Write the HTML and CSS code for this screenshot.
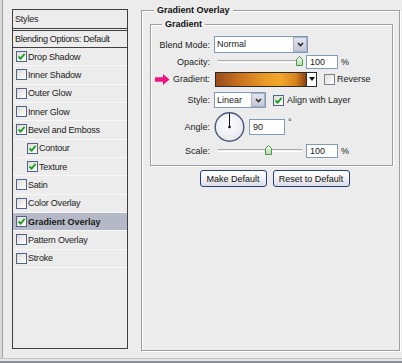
FILE: index.html
```html
<!DOCTYPE html>
<html>
<head>
<meta charset="utf-8">
<title>Layer Style - Gradient Overlay</title>
<link rel="stylesheet" href="styles.css">
</head>
<body>
<div class="dialog">
  <div class="sidebar">
    <div class="list">
      <div class="head">Styles</div>
      <div class="blend">Blending Options: Default</div>
      <div class="item"><span class="cb"><svg viewBox="0 0 9 9" width="9" height="9"><path d="M1.5 4.5 L3.6 6.6 L7.6 1.8" fill="none" stroke="#1f9c25" stroke-width="1.8"/></svg></span>Drop Shadow</div>
      <div class="item"><span class="cb"></span>Inner Shadow</div>
      <div class="item"><span class="cb"></span>Outer Glow</div>
      <div class="item"><span class="cb"></span>Inner Glow</div>
      <div class="item"><span class="cb"><svg viewBox="0 0 9 9" width="9" height="9"><path d="M1.5 4.5 L3.6 6.6 L7.6 1.8" fill="none" stroke="#1f9c25" stroke-width="1.8"/></svg></span>Bevel and Emboss</div>
      <div class="item sub"><span class="cb"><svg viewBox="0 0 9 9" width="9" height="9"><path d="M1.5 4.5 L3.6 6.6 L7.6 1.8" fill="none" stroke="#1f9c25" stroke-width="1.8"/></svg></span>Contour</div>
      <div class="item sub"><span class="cb"><svg viewBox="0 0 9 9" width="9" height="9"><path d="M1.5 4.5 L3.6 6.6 L7.6 1.8" fill="none" stroke="#1f9c25" stroke-width="1.8"/></svg></span>Texture</div>
      <div class="item"><span class="cb"></span>Satin</div>
      <div class="item"><span class="cb"></span>Color Overlay</div>
      <div class="item active"><span class="cb"><svg viewBox="0 0 9 9" width="9" height="9"><path d="M1.5 4.5 L3.6 6.6 L7.6 1.8" fill="none" stroke="#1f9c25" stroke-width="1.8"/></svg></span>Gradient Overlay</div>
      <div class="item"><span class="cb"></span>Pattern Overlay</div>
      <div class="item"><span class="cb"></span>Stroke</div>
    </div>
  </div>
  <div class="main">
    <fieldset class="outer">
      <legend>Gradient Overlay</legend>
      <fieldset class="inner">
        <legend>Gradient</legend>
        <div class="row r-blend">
          <span class="lbl">Blend Mode:</span>
          <div class="select w-blend"><span class="sval">Normal</span><span class="sbtn"><svg viewBox="0 0 7 5" width="7" height="5"><path d="M1 1 L3.5 3.6 L6 1" fill="none" stroke="#2e2e2e" stroke-width="1.6"/></svg></span></div>
        </div>
        <div class="row r-opacity">
          <span class="lbl">Opacity:</span>
          <div class="slider"><span class="track"></span><svg class="thumb" style="left:78px" viewBox="0 0 7 10" width="7" height="10"><defs><linearGradient id="tg1" x1="0" y1="0" x2="0" y2="1"><stop offset="0" stop-color="#f6fbf2"/><stop offset="1" stop-color="#b7dca8"/></linearGradient></defs><path d="M3.5 0.5 L6.5 3.5 L6.5 9.5 L0.5 9.5 L0.5 3.5 Z" fill="url(#tg1)" stroke="#4b944b"/></svg></div>
          <span class="num">100</span>
          <span class="unit">%</span>
        </div>
        <div class="row r-grad">
          <span class="lbl"><svg class="arrow" viewBox="0 0 15 11" width="15" height="11"><path d="M0 3.2 H8 V0 L14.5 5.5 L8 11 V7.8 H0 Z" fill="#ee1680"/></svg>Gradient:</span>
          <div class="gbar"></div>
          <span class="gdrop"><span class="tri"></span></span>
          <span class="cb rev"></span>
          <span class="ctext">Reverse</span>
        </div>
        <div class="row r-style">
          <span class="lbl">Style:</span>
          <div class="select w-style"><span class="sval">Linear</span><span class="sbtn"><svg viewBox="0 0 7 5" width="7" height="5"><path d="M1 1 L3.5 3.6 L6 1" fill="none" stroke="#2e2e2e" stroke-width="1.6"/></svg></span></div>
          <span class="cb align"><svg viewBox="0 0 9 9" width="9" height="9"><path d="M1.5 4.5 L3.6 6.6 L7.6 1.8" fill="none" stroke="#1f9c25" stroke-width="1.8"/></svg></span>
          <span class="ctext">Align with Layer</span>
        </div>
        <div class="row r-angle">
          <span class="lbl">Angle:</span>
          <svg class="dial" viewBox="0 0 32 32" width="32" height="32"><defs><radialGradient id="dg" cx="0.45" cy="0.4" r="0.6"><stop offset="0" stop-color="#ffffff"/><stop offset="1" stop-color="#e6e8ee"/></radialGradient></defs><circle cx="15.5" cy="16" r="14.3" fill="url(#dg)" stroke="#4a5878" stroke-width="1.4"/><line x1="15.5" y1="16" x2="15.5" y2="2.5" stroke="#111" stroke-width="1"/><circle cx="15.5" cy="16" r="1.3" fill="#111"/></svg>
          <span class="num w-angle">90</span>
          <span class="deg">°</span>
        </div>
        <div class="row r-scale">
          <span class="lbl">Scale:</span>
          <div class="slider"><span class="track"></span><svg class="thumb" style="left:47px" viewBox="0 0 7 10" width="7" height="10"><defs><linearGradient id="tg2" x1="0" y1="0" x2="0" y2="1"><stop offset="0" stop-color="#f6fbf2"/><stop offset="1" stop-color="#b7dca8"/></linearGradient></defs><path d="M3.5 0.5 L6.5 3.5 L6.5 9.5 L0.5 9.5 L0.5 3.5 Z" fill="url(#tg2)" stroke="#4b944b"/></svg></div>
          <span class="num">100</span>
          <span class="unit">%</span>
        </div>
      </fieldset>
      <div class="buttons">
        <button class="btn w-make">Make Default</button>
        <button class="btn w-reset">Reset to Default</button>
      </div>
    </fieldset>
  </div>
</div>
<div class="footer"></div>
</body>
</html>
```
FILE: styles.css
```css
* { box-sizing: border-box; }
html, body { margin: 0; padding: 0; }
body {
  width: 402px;
  height: 363px;
  overflow: hidden;
  background: #d8d8d8;
  font-family: "Liberation Sans", Arial, sans-serif;
  font-size: 9px;
  color: #1a1a1a;
}
.dialog {
  display: flex;
  height: 358px;
  margin-left: 2px;
  border-left: 1px solid #a2a2a2;
  background: #ececec;
}

/* ---------- left styles list ---------- */
.sidebar {
  flex: none;
  width: 125px;
  padding: 9px 0 0 9px;
}
.list {
  width: 116px;
  height: 340px;
  border: 1px solid #3f3f3f;
  background: #ececec;
  letter-spacing: -0.2px;
}
.head {
  height: 19px;
  line-height: 18px;
  padding-left: 2px;
  border-bottom: 1px solid #3f3f3f;
}
.blend {
  margin-top: 1px;
  height: 18px;
  line-height: 16px;
  padding-left: 2px;
  border-top: 1px solid #3f3f3f;
  border-bottom: 1px solid #3f3f3f;
  letter-spacing: -0.3px;
}
.item {
  display: flex;
  align-items: center;
  height: 18.33px;
  padding-left: 3px;
  border-bottom: 1px solid #f7f7f7;
}
.item.sub { padding-left: 14px; }
.item.active {
  background: #b5b8c6;
  font-weight: bold;
  letter-spacing: 0;
}
.cb {
  flex: none;
  display: inline-flex;
  align-items: center;
  justify-content: center;
  width: 11px;
  height: 11px;
  margin-right: 1px;
  border: 1px solid #4f6488;
  background: linear-gradient(135deg, #dedcd5, #ffffff);
}
.cb svg { display: block; }

/* ---------- right panel ---------- */
.main {
  flex: none;
  margin-left: 13px;
  padding-top: 5px;
}
fieldset {
  margin: 0;
  min-width: 0;
  border: 1px solid #9e9e9e;
  box-shadow: inset 1px 1px 0 #ffffff, 1px 1px 0 #ffffff;
}
legend {
  font-weight: bold;
  line-height: 11px;
  padding: 0 3px;
  background: #ececec;
  color: #111;
}
.outer {
  width: 259px;
  height: 346px;
  padding: 3px 0 0 8px;
}
.outer > legend { margin-left: 4px; }
.inner {
  width: 243px;
  padding: 5px 0 7px 0;
}
.inner > legend { margin-left: 11px; }

.row {
  display: flex;
  align-items: center;
}
.r-blend { height: 19px; }
.r-opacity { height: 15px; }
.r-grad { height: 16px; margin-top: 2px; }
.r-style { height: 18px; margin-top: 4px; }
.r-angle { height: 32px; margin-top: 2px; }
.r-scale { height: 15px; }

.lbl {
  flex: none;
  display: flex;
  align-items: center;
  justify-content: flex-end;
  width: 59px;
  margin-right: 4px;
  white-space: nowrap;
}
.arrow { display: block; margin-right: 3px; }

.select {
  flex: none;
  display: flex;
  height: 17px;
  border: 1px solid #7f9db9;
  background: #ffffff;
}
.w-blend { width: 94px; }
.w-style { width: 52px; height: 16px; }
.sval {
  flex: 1;
  padding-left: 2px;
  line-height: 15px;
}
.w-style .sval { line-height: 14px; }
.sbtn {
  flex: none;
  width: 14px;
  display: flex;
  align-items: center;
  justify-content: center;
  border: 1px solid #a9b0c4;
  background: linear-gradient(#e3e5ed, #c3c7d5);
}
.sbtn svg { display: block; }

.slider {
  position: relative;
  flex: none;
  width: 84px;
  height: 15px;
  margin-left: 4px;
  display: flex;
  align-items: center;
}
.track {
  display: block;
  width: 100%;
  height: 3px;
  border-top: 1px solid #a8a8a8;
  border-bottom: 1px solid #ffffff;
  background: #f2f2f2;
}
.thumb {
  position: absolute;
  top: 2px;
}
.num {
  flex: none;
  width: 32px;
  height: 14px;
  margin-left: 4px;
  padding-left: 3px;
  line-height: 12px;
  border: 1px solid #7f9db9;
  background: #ffffff;
}
.unit { margin-left: 3px; }

.gbar {
  flex: none;
  width: 92px;
  height: 15px;
  margin-left: 1px;
  border: 1px solid #2a2a2a;
  background: linear-gradient(90deg, #9a4c1c 0%, #c8701e 25%, #eb9a26 55%, #f1a62b 72%, #d9861f 88%, #8a4212 100%);
}
.gdrop {
  flex: none;
  width: 10px;
  height: 15px;
  display: flex;
  align-items: center;
  justify-content: center;
  border: 1px solid #2a2a2a;
  border-left: none;
  background: #ffffff;
}
.tri {
  width: 0;
  height: 0;
  border-left: 3px solid transparent;
  border-right: 3px solid transparent;
  border-top: 4px solid #111;
}
.cb.rev { margin-left: 7px; margin-right: 2px; border-color: #7a8090; background: linear-gradient(135deg, #e0e0da, #ffffff); }
.cb.align { margin-left: 7px; margin-right: 3px; }
.ctext { white-space: nowrap; }

.dial { display: block; flex: none; margin-right: 2px; }
.num.w-angle { width: 36px; height: 16px; line-height: 14px; margin-left: 1px; }
.deg { margin-left: 3px; align-self: flex-start; margin-top: 6px; }

.buttons {
  display: flex;
  justify-content: center;
  gap: 6px;
  margin-top: 4px;
}
.btn {
  height: 17px;
  padding: 0;
  border: 1px solid #22407a;
  border-radius: 3px;
  background: linear-gradient(#ffffff 0%, #f3f3f6 50%, #d9dbe6 100%);
  font-family: "Liberation Sans", Arial, sans-serif;
  font-size: 9px;
  color: #111;
}
.w-make { width: 67px; }
.w-reset { width: 77px; }

.footer {
  height: 5px;
  border-top: 1px solid #c2c2c2;
  border-bottom: 2px solid #8b909c;
  background: #e6e6e6;
}
```
